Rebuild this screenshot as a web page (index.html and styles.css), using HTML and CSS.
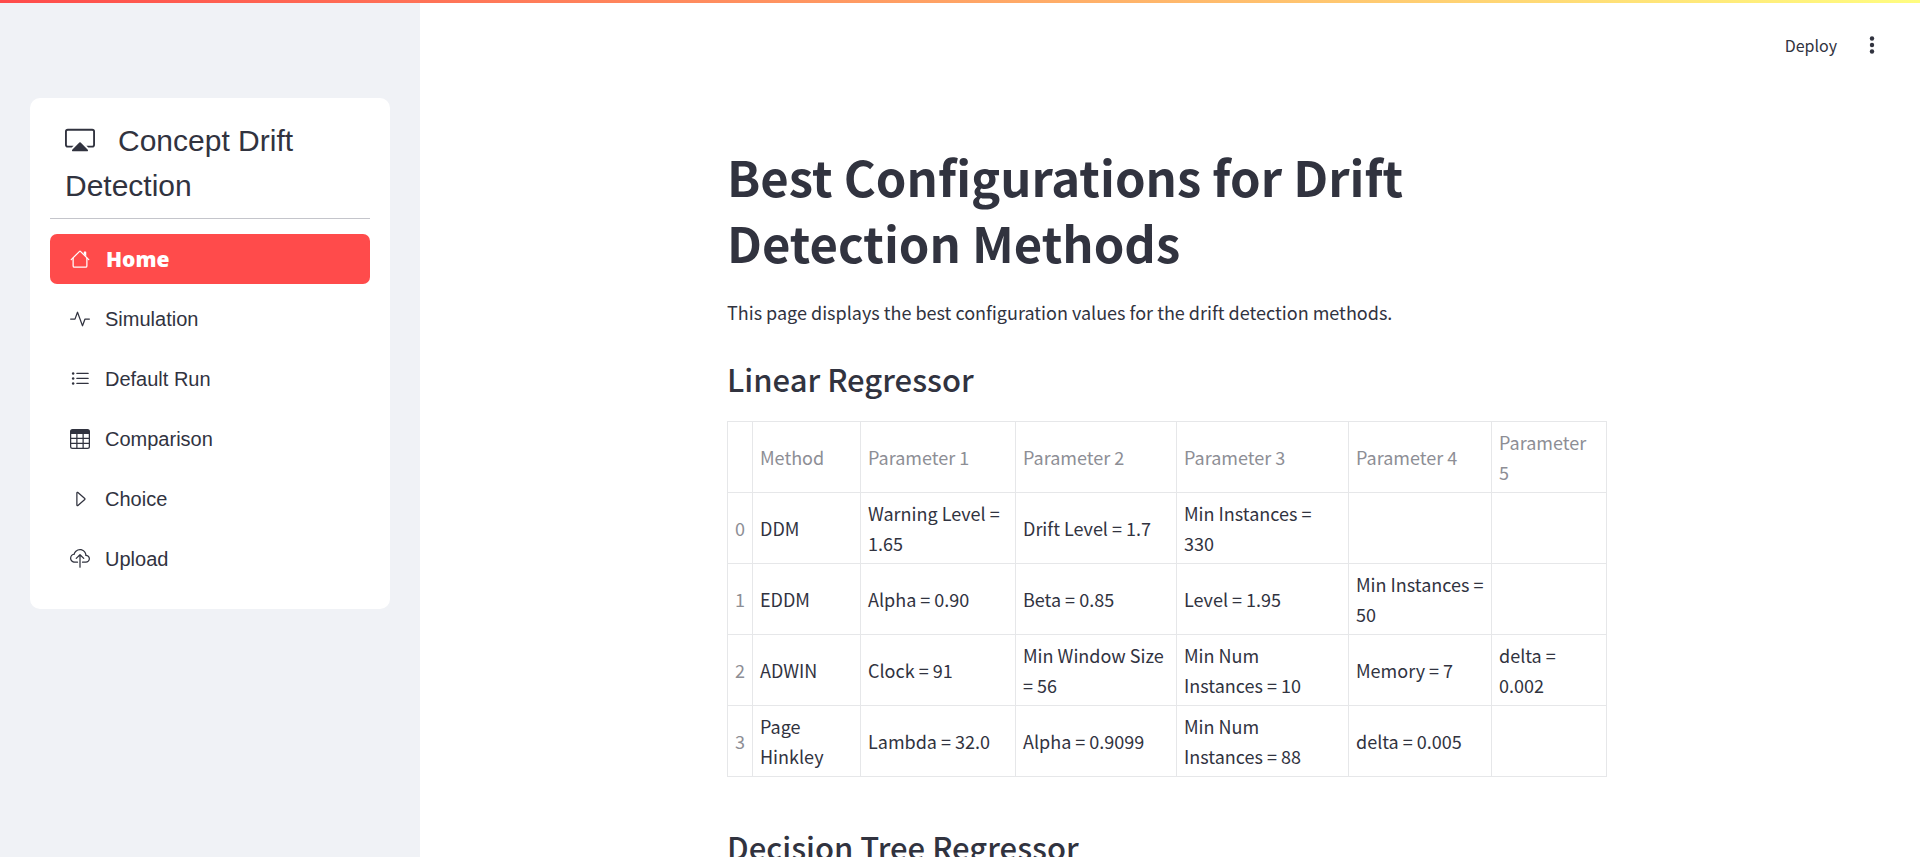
FILE: index.html
```html
<!DOCTYPE html>
<html lang="en">
<head>
<meta charset="utf-8">
<title>Concept Drift Detection</title>
<link rel="stylesheet" href="styles.css">
</head>
<body>
<div class="decoration"></div>
<div class="app">
  <aside class="sidebar">
    <div class="menu">
      <div class="menu-title">
        <svg class="title-icon" viewBox="0 0 16 16" fill="currentColor" aria-hidden="true"><path d="M7.646 9.354a.5.5 0 0 1 .708 0l3.792 3.792a.5.5 0 0 1-.353.854H4.207a.5.5 0 0 1-.353-.854z"/><path d="M11.414 11H14.500a.5.5 0 0 0 .5-.5v-7a.5.5 0 0 0-.5-.5h-13a.5.5 0 0 0-.5.5v7a.5.5 0 0 0 .5.5h3.086l-1 1H1.500A1.500 1.500 0 0 1 0 10.500v-7A1.500 1.500 0 0 1 1.500 2h13A1.500 1.500 0 0 1 16 3.500v7a1.500 1.500 0 0 1-1.500 1.500h-2.086z"/></svg><span>Concept Drift Detection</span>
      </div>
      <hr class="menu-rule">
      <nav class="menu-list">
        <a class="menu-link active" href="#home"><svg class="icon" viewBox="0 0 16 16" fill="currentColor" aria-hidden="true"><path fill-rule="evenodd" d="M2 13.500V7h1v6.500a.5.5 0 0 0 .5.5h9a.5.5 0 0 0 .5-.5V7h1v6.500a1.500 1.500 0 0 1-1.500 1.500h-9A1.500 1.500 0 0 1 2 13.500zm11-11V6l-2-2V2.500a.5.5 0 0 1 .5-.5h1a.5.5 0 0 1 .5.5z"/><path fill-rule="evenodd" d="M7.293 1.500a1 1 0 0 1 1.414 0l6.647 6.646a.5.5 0 0 1-.708.708L8 2.207 1.354 8.854a.5.5 0 1 1-.708-.708z"/></svg>Home</a>
        <a class="menu-link" href="#simulation"><svg class="icon" viewBox="0 0 16 16" fill="currentColor" aria-hidden="true"><path fill-rule="evenodd" d="M6 2a.5.5 0 0 1 .47.33L10 12.036l1.530-4.208A.5.5 0 0 1 12 7.500h3.500a.5.5 0 0 1 0 1h-3.150l-1.880 5.170a.5.5 0 0 1-.94 0L6 3.964 4.470 8.171A.5.5 0 0 1 4 8.500H.5a.5.5 0 0 1 0-1h3.150l1.880-5.170A.5.5 0 0 1 6 2"/></svg>Simulation</a>
        <a class="menu-link" href="#default-run"><svg class="icon" viewBox="0 0 16 16" fill="currentColor" aria-hidden="true"><path fill-rule="evenodd" d="M5 11.500a.5.5 0 0 1 .5-.5h9a.5.5 0 0 1 0 1h-9a.5.5 0 0 1-.5-.5m0-4a.5.5 0 0 1 .5-.5h9a.5.5 0 0 1 0 1h-9a.5.5 0 0 1-.5-.5m0-4a.5.5 0 0 1 .5-.5h9a.5.5 0 0 1 0 1h-9a.5.5 0 0 1-.5-.5"/><circle cx="2.500" cy="3.500" r="1"/><circle cx="2.500" cy="7.500" r="1"/><circle cx="2.500" cy="11.500" r="1"/></svg>Default Run</a>
        <a class="menu-link" href="#comparison"><svg class="icon" viewBox="0 0 16 16" fill="currentColor" aria-hidden="true"><path d="M0 2a2 2 0 0 1 2-2h12a2 2 0 0 1 2 2v12a2 2 0 0 1-2 2H2a2 2 0 0 1-2-2zm15 2h-4v3h4zm0 4h-4v3h4zm0 4h-4v3h3a1 1 0 0 0 1-1zm-5 3v-3H6v3zm-5 0v-3H1v2a1 1 0 0 0 1 1zm-4-4h4V8H1zm0-4h4V4H1zm5-3v3h4V4zm4 4H6v3h4z"/></svg>Comparison</a>
        <a class="menu-link" href="#choice"><svg class="icon" viewBox="0 0 16 16" fill="currentColor" aria-hidden="true"><path d="M6 12.796V3.204L11.481 8zm.659.753 5.480-4.796a1 1 0 0 0 0-1.506L6.660 2.451C6.011 1.885 5 2.345 5 3.204v9.592a1 1 0 0 0 1.659.753"/></svg>Choice</a>
        <a class="menu-link" href="#upload"><svg class="icon" viewBox="0 0 16 16" fill="currentColor" aria-hidden="true"><path fill-rule="evenodd" d="M4.406 1.342A5.530 5.530 0 0 1 8 0c2.690 0 4.923 2 5.166 4.579C14.758 4.804 16 6.137 16 7.773 16 9.569 14.502 11 12.687 11H10a.5.5 0 0 1 0-1h2.688C13.979 10 15 8.988 15 7.773c0-1.216-1.020-2.228-2.313-2.228h-.5v-.5C12.188 2.825 10.328 1 8 1a4.530 4.530 0 0 0-2.941 1.100c-.757.652-1.153 1.438-1.153 2.055v.448l-.445.049C2.064 4.805 1 5.952 1 7.318 1 8.785 2.230 10 3.781 10H6a.5.5 0 0 1 0 1H3.781C1.708 11 0 9.366 0 7.318c0-1.763 1.266-3.223 2.942-3.593.143-.863.698-1.723 1.464-2.383"/><path fill-rule="evenodd" d="M7.646 4.146a.5.5 0 0 1 .708 0l3 3a.5.5 0 0 1-.708.708L8.500 5.707V14.500a.5.5 0 0 1-1 0V5.707L5.354 7.854a.5.5 0 1 1-.708-.708z"/></svg>Upload</a>
      </nav>
    </div>
  </aside>
  <div class="view">
    <header class="toolbar">
      <button class="deploy" type="button">Deploy</button>
      <button class="more" type="button" aria-label="Main menu"><svg class="dots" viewBox="0 0 20 20" fill="currentColor" aria-hidden="true"><circle cx="10" cy="3.500" r="2.200"/><circle cx="10" cy="10" r="2.200"/><circle cx="10" cy="16.500" r="2.200"/></svg></button>
    </header>
    <main class="content">
      <h1 class="page-title">Best Configurations for Drift Detection Methods</h1>
      <p class="lead">This page displays the best configuration values for the drift detection methods.</p>
      <h2 class="section-title">Linear Regressor</h2>
      <table class="params">
        <colgroup><col class="c-index"><col class="c-method"><col class="c-p1"><col class="c-p2"><col class="c-p3"><col class="c-p4"><col class="c-p5"></colgroup>
        <thead>
          <tr><th></th><th>Method</th><th>Parameter 1</th><th>Parameter 2</th><th>Parameter 3</th><th>Parameter 4</th><th>Parameter 5</th></tr>
        </thead>
        <tbody>
          <tr><th>0</th><td>DDM</td><td>Warning Level = 1.65</td><td>Drift Level = 1.7</td><td>Min Instances = 330</td><td></td><td></td></tr>
          <tr><th>1</th><td>EDDM</td><td>Alpha = 0.90</td><td>Beta = 0.85</td><td>Level = 1.95</td><td>Min Instances = 50</td><td></td></tr>
          <tr><th>2</th><td>ADWIN</td><td>Clock = 91</td><td>Min Window Size = 56</td><td>Min Num Instances = 10</td><td>Memory = 7</td><td>delta = 0.002</td></tr>
          <tr><th>3</th><td>Page Hinkley</td><td>Lambda = 32.0</td><td>Alpha = 0.9099</td><td>Min Num Instances = 88</td><td>delta = 0.005</td><td></td></tr>
        </tbody>
      </table>
      <h2 class="section-title">Decision Tree Regressor</h2>
    </main>
  </div>
</div>
</body>
</html>
```
FILE: styles.css
```css
* { box-sizing: border-box; }

body {
  margin: 0;
  color: #31333f;
  background: #fff;
  font-family: "Noto Sans CJK SC", "Noto Sans", sans-serif;
  font-size: 18px;
  line-height: 30px;
}

.decoration {
  position: fixed;
  top: 0;
  left: 0;
  right: 0;
  height: 3px;
  background: linear-gradient(90deg, #ff4b4b, #fffd80);
  z-index: 2;
}

.app {
  display: flex;
  height: 100vh;
  overflow: hidden;
}

.sidebar {
  flex: 0 0 420px;
  padding: 98px 30px 30px;
  background: #f0f2f6;
}

.menu {
  padding: 20px;
  border-radius: 10px;
  background: #fff;
  font-family: "Liberation Sans", Arial, sans-serif;
}

.menu-title {
  padding: 0 15px;
  font-size: 30px;
  line-height: 45px;
}

.title-icon {
  width: 30px;
  height: 30px;
  margin-right: 23px;
  vertical-align: -4px;
}

.menu-rule {
  height: 1px;
  margin: 10px 0;
  border: 0;
  background: #c4c5cb;
}

.menu-list {
  display: flex;
  flex-direction: column;
  gap: 10px;
  padding: 5px 0;
}

.menu-link {
  display: flex;
  align-items: center;
  gap: 15px;
  padding: 10px 20px;
  border-radius: 7px;
  color: inherit;
  font-size: 20px;
  text-decoration: none;
}

.menu-link.active {
  gap: 16px;
  background: #ff4b4b;
  color: #fff;
  font-family: "Open Sans", "Arial Black", sans-serif;
  font-size: 21px;
  font-weight: 800;
}

.icon {
  width: 20px;
  height: 20px;
}

.view {
  flex: 1;
  height: 100vh;
  overflow-y: auto;
  scrollbar-width: none;
}

.toolbar {
  display: flex;
  justify-content: flex-end;
  align-items: center;
  gap: 25px;
  padding: 30px 38px 0 0;
}

.deploy,
.more {
  padding: 0;
  border: 0;
  background: none;
  color: inherit;
  font: inherit;
}

.deploy {
  font-size: 16px;
}

.more {
  display: flex;
}

.dots {
  width: 20px;
  height: 20px;
}

.content {
  max-width: 886px;
  margin: 0 auto;
  padding: 83px 6px 0 0;
}

.page-title {
  margin: 0;
  font-size: 49px;
  font-weight: 700;
  line-height: 66px;
}

.lead {
  margin: 22px 0 0;
}

.section-title {
  margin: 31px 0 21px;
  font-size: 31px;
  font-weight: 500;
  line-height: 42px;
}

.params {
  width: 100%;
  margin-bottom: 49px;
  border-collapse: collapse;
  table-layout: fixed;
}

.params th,
.params td {
  padding: 5px 7px;
  border: 1px solid #e6e7e9;
  text-align: left;
  vertical-align: middle;
  font-weight: 400;
}

.params th {
  color: #8d8e95;
}

.c-index { width: 25px; }
.c-method { width: 108px; }
.c-p1 { width: 155px; }
.c-p2 { width: 161px; }
.c-p3 { width: 172px; }
.c-p4 { width: 143px; }
.c-p5 { width: 115px; }
```
